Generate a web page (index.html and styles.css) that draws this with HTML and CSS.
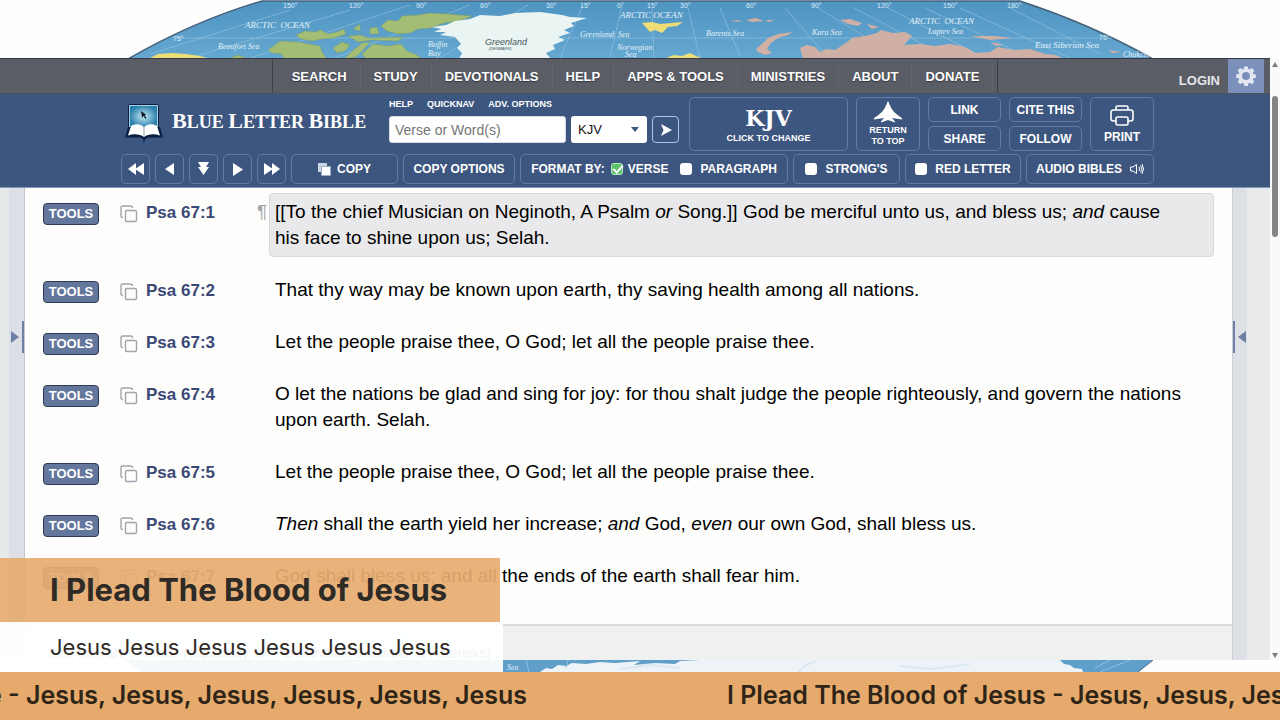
FILE: index.html
```html
<!DOCTYPE html>
<html lang="en">
<head>
  <meta charset="UTF-8">
  <meta name="viewport" content="width=device-width, initial-scale=1">
  <title>Psalm 67 - Blue Letter Bible</title>
  <link rel="stylesheet" href="styles.css">
</head>
<body>
  <!-- world map backdrop -->
  <svg class="map-top" viewBox="0 0 1280 58" preserveAspectRatio="xMidYMin slice" aria-hidden="true">
    <defs>
      <linearGradient id="sea" x1="0" y1="0" x2="0" y2="1">
        <stop offset="0" stop-color="#4f94c2"/>
        <stop offset="1" stop-color="#65a8d1"/>
      </linearGradient>
    </defs>
    <path d="M128 59 C168 36 214 15 262 1 H1020 C1066 16 1112 36 1153 59 Z" fill="url(#sea)" stroke="#46637c" stroke-width="1.5"/>
    <g class="grid-lines">
      <path d="M172 38 H1112 M290 10 L150 54 M350 10 L190 58 M410 5 L250 58 M470 5 L335 58 M528 5 L440 58 M583 5 L560 58 M622 5 L610 58 M652 8 L654 58 M688 8 L700 58 M720 8 L740 56 M785 8 L828 58 M818 8 L900 58 M854 8 L930 48 M888 8 L985 58 M925 8 L1030 58 M960 8 L1070 58 M1010 8 L1100 54"/>
    </g>
    <g class="land-green">
      <path d="M268 50 L280 41 L298 42 L309 44 L320 46 L322 52 L327 59 H285 L281 54 L272 53 Z"/>
      <path d="M296 35 L305 31 L315 32 L321 30 L328 34 L337 32 L344 29 L346 34 L334 38 L322 39 L312 41 L301 39 Z"/>
      <path d="M381 26 L388 20 L398 21 L402 16 L418 15 L430 13 L448 14 L472 16 L460 21 L444 23 L431 28 L418 29 L410 33 L398 34 L387 31 Z"/>
      <path d="M333 48 L342 42 L350 45 L345 51 L337 53 Z M350 53 L362 43 L370 42 L363 50 L356 57 L344 59 Z M348 36 L360 35 L368 38 L403 37 L398 41 L372 40 L358 42 Z"/>
      <path d="M362 54 L373 44 L388 46 L401 44 L407 51 L417 55 L422 59 H366 Z M353 29 L360 24 L360 31 Z M370 28 L377 27 L379 34 L370 34 Z M228 59 L238 55 L248 59 Z"/>
    </g>
    <path class="land-yellow" d="M148 59 L158 54 L172 53 L186 54 L200 56 L211 59 Z M642 23 L652 22 L660 24 L683 22 L677 26 L668 27 L662 33 L655 30 L650 32 Z M666 58 L674 55 L682 56 L690 53 L696 56 L704 59 Z"/>
    <path class="greenland" d="M432 27 L446 25 L455 21 L470 19 L480 15 L500 16 L515 13 L540 12 L562 15 L570 17 L587 18 L571 23 L574 26 L564 30 L570 33 L558 37 L565 40 L553 45 L555 49 L546 53 L551 59 H459 L462 53 L457 48 L461 44 L455 37 L440 35 L446 32 L434 32 L441 29 Z"/>
    <g class="land-pink">
      <path d="M756 49 L763 43 L768 38 L778 34 L793 32 L788 35 L778 38 L771 43 L767 49 L772 53 L765 55 L758 52 Z"/>
      <path d="M800 48 L807 45 L815 47 L820 52 L826 49 L835 50 L846 43 L852 38 L865 36 L877 33 L881 30 L893 33 L905 32 L912 36 L904 45 L920 44 L935 46 L950 44 L962 46 L969 49 L975 53 L990 52 L998 47 L1014 50 L1030 49 L1045 54 L1056 55 L1064 59 H803 Z"/>
      <path d="M840 20 L850 19 L862 23 L858 26 L848 24 Z M867 24 L879 27 L872 29 Z M971 36 L995 36 L1012 38 L990 40 Z M990 42 L1004 45 L996 46 Z M1109 50 L1121 52 L1112 53 Z M730 21 L738 20 L742 22 Z M746 20 L756 18 L764 21 L752 22 Z M766 20 L775 20 L768 22 Z"/>
    </g>
    <g class="degrees">
      <text x="283" y="8">150°</text><text x="349" y="8">120°</text><text x="416" y="8">90°</text><text x="480" y="8">60°</text><text x="546" y="8">30°</text><text x="580" y="8">15°</text><text x="617" y="8">0°</text><text x="647" y="8">15°</text><text x="680" y="8">30°</text><text x="746" y="8">60°</text><text x="811" y="8">90°</text><text x="877" y="8">120°</text><text x="943" y="8">150°</text><text x="1007" y="8">180°</text><text x="173" y="41">75°</text><text x="1099" y="40">75°</text>
    </g>
    <g class="seas">
      <text x="245" y="28">ARCTIC&#160; OCEAN</text><text x="620" y="18">ARCTIC OCEAN</text><text x="909" y="24">ARCTIC&#160; OCEAN</text><text x="1035" y="48">East Siberian Sea</text>
    </g>
    <g class="seas small">
      <text x="218" y="49">Beaufort Sea</text><text x="580" y="37">Greenland&#160; Sea</text><text x="428" y="47">Baffin</text><text x="428" y="56">Bay</text><text x="617" y="50">Norwegian</text><text x="625" y="57">Sea</text><text x="706" y="36">Barents Sea</text><text x="812" y="35">Kara Sea</text><text x="928" y="34">Laptev Sea</text><text x="1123" y="57">Chukchi</text>
    </g>
    <text class="country" x="485" y="45">Greenland</text>
    <text class="country tiny" x="489" y="50">(DENMARK)</text>
  </svg>

  <div class="browser">
    <div class="page">
      <nav class="site-nav">
        <ul class="menu">
          <li><a href="#">SEARCH</a></li>
          <li><a href="#">STUDY</a></li>
          <li><a href="#">DEVOTIONALS</a></li>
          <li><a href="#">HELP</a></li>
          <li><a href="#">APPS &amp; TOOLS</a></li>
          <li><a href="#">MINISTRIES</a></li>
          <li><a href="#">ABOUT</a></li>
          <li><a href="#">DONATE</a></li>
        </ul>
        <div class="account">
          <a class="login" href="#">LOGIN</a>
          <button class="settings" aria-label="Settings">
            <svg width="20" height="20" viewBox="0 0 20 20"><path fill-rule="evenodd" fill="#e2e6f1" d="M8.2 0.5h3.6l.5 2.5 1.3.6 2.2-1.5 2.5 2.5-1.5 2.2.6 1.3 2.5.5v3.2l-2.5.5-.6 1.3 1.5 2.2-2.5 2.5-2.2-1.5-1.3.6-.5 2.5H8.2l-.5-2.5-1.3-.6-2.2 1.5-2.5-2.5 1.5-2.2-.6-1.3-2.5-.5V8.6l2.5-.5.6-1.3L1.7 4.6l2.5-2.5 2.2 1.5 1.3-.6zM10 6a4 4 0 1 0 0 8 4 4 0 0 0 0-8z"/></svg>
          </button>
        </div>
      </nav>

      <header class="header">
        <div class="header-inner">
          <div class="bar">
            <a class="logo" href="#" aria-label="Blue Letter Bible">
              <svg width="40" height="42" viewBox="0 0 40 42">
                <defs><radialGradient id="screen"><stop offset="0" stop-color="#c4ecf3"/><stop offset="1" stop-color="#2c80ad"/></radialGradient></defs>
                <rect x="4" y="1" width="31" height="26" rx="2" fill="#0d1f42"/>
                <rect x="5.5" y="2.5" width="28" height="22" fill="url(#screen)" stroke="#a6d2e4"/>
                <path d="M17 8l1 7 1.5-2 2 3 1-1-2-3h2z" fill="#101a30"/>
                <path d="M4 24L1 34.5h15l3.5 2V41l1.5-4.5 3-2h15L36 24z" fill="#0d1f42"/>
                <path d="M20 24.5c-3-4-9-4-13-1.5L4 32.5c5-2 12-2 16 1.5 4-3.5 11-3.5 16-1.5L33 23c-4-2.5-10-2.5-13 1.5z" fill="#fff"/>
                <path d="M20 24.5V34" stroke="#9aa7bd"/>
              </svg>
              <span class="logo-text"><b>B</b>LUE <b>L</b>ETTER <b>B</b>IBLE</span>
            </a>
            <form class="search">
              <div class="search-links"><a href="#">HELP</a><a href="#">QUICKNAV</a><a href="#">ADV. OPTIONS</a></div>
              <div class="search-row">
                <input type="text" class="search-input" placeholder="Verse or Word(s)" aria-label="Verse or Word(s)">
                <span class="select-wrap">
                  <select aria-label="Version"><option>KJV</option></select>
                </span>
                <button type="button" class="go" aria-label="Search"><svg width="12" height="12" viewBox="0 0 12 12"><path d="M1 0l11 6-11 6 2.5-6z" fill="#fff"/></svg></button>
              </div>
            </form>
            <button class="btn version"><span class="version-name">KJV</span><small>CLICK TO CHANGE</small></button>
            <button class="btn stack top">
              <svg width="28" height="22" viewBox="0 0 28 22"><path d="M14 0l3.5 7.5Q20 12 28 17v1.5L18 17l3 3.5v1L14 19l-7 2.5v-1L10 17 0 18.5V17q8-5 10.500-9.500z" fill="#fff"/></svg>
              <small>RETURN<br>TO TOP</small>
            </button>
            <div class="pair"><button class="btn">LINK</button><button class="btn">SHARE</button></div>
            <div class="pair"><button class="btn">CITE THIS</button><button class="btn">FOLLOW</button></div>
            <button class="btn stack print">
              <svg width="24" height="21" viewBox="0 0 24 21" fill="none" stroke="#fff" stroke-width="1.6"><path d="M6 5V2.5Q6 1 7.5 1h9Q18 1 18 2.5V5M6 16H3.5Q1 16 1 13.5v-6Q1 5 3.5 5h17Q23 5 23 7.5v6q0 2.5-2.5 2.5H18"/><rect x="6" y="12" width="12" height="8" rx="1.5"/></svg>
              PRINT
            </button>
          </div>

          <div class="bar tools-bar">
            <button class="btn arrow" aria-label="Previous book"><svg width="16" height="12" viewBox="0 0 16 12"><path d="M8 0v12L0 6zM16 0v12L7 6z" fill="#fff"/></svg></button>
            <button class="btn arrow" aria-label="Previous chapter"><svg width="9" height="12" viewBox="0 0 9 12"><path d="M9 0v12L0 6z" fill="#fff"/></svg></button>
            <button class="btn arrow" aria-label="Jump down"><svg width="11" height="14" viewBox="0 0 11 14"><path d="M0 0h11L8 5h3l-5.5 8L0 5h3z" fill="#fff"/></svg></button>
            <button class="btn arrow" aria-label="Next chapter"><svg width="10" height="13" viewBox="0 0 10 13"><path d="M0 0v13l10-6.5z" fill="#fff"/></svg></button>
            <button class="btn arrow" aria-label="Next book"><svg width="16" height="12" viewBox="0 0 16 12"><path d="M0 0v12l9-6zM8 0v12l8-6z" fill="#fff"/></svg></button>
            <button class="btn copy"><svg width="13" height="13" viewBox="0 0 13 13"><path d="M0 0h9v9H0z" fill="#cbd5e5"/><path d="M3.5 3.5h9v9h-9z" fill="#fff" stroke="#9aacc8"/></svg>COPY</button>
            <button class="btn copy-options">COPY OPTIONS</button>
            <div class="btn format">
              FORMAT BY:
              <label><input type="checkbox" checked>VERSE</label>
              <label class="wide"><input type="checkbox">PARAGRAPH</label>
            </div>
            <label class="btn wide strongs"><input type="checkbox">STRONG'S</label>
            <label class="btn wide red-letter"><input type="checkbox">RED LETTER</label>
            <button class="btn audio">AUDIO BIBLES<svg width="14" height="12" viewBox="0 0 14 12" fill="none" stroke="#fff"><path d="M.5 4v4H3l3.5 2.5v-9L3 4zM9 4q1.5 2 0 4M10.5 2.5q3 3.5 0 7M12 1q3 5 0 10"/></svg></button>
          </div>
        </div>
      </header>

      <div class="content">
        <aside class="side left"><button class="drawer" aria-label="Open left panel"></button></aside>
        <main class="chapter">
          <section class="verses">
            <div class="verse current">
              <button class="tools">TOOLS</button><svg class="copy-icon" viewBox="0 0 18 18"><use href="#copy"/></svg><a href="#">Psa 67:1</a><span class="pilcrow">¶</span>
              <p>[[To the chief Musician on Neginoth, A Psalm <em>or</em> Song.]] God be merciful unto us, and bless us; <em>and</em> cause his face to shine upon us; Selah.</p>
            </div>
            <div class="verse">
              <button class="tools">TOOLS</button><svg class="copy-icon" viewBox="0 0 18 18"><use href="#copy"/></svg><a href="#">Psa 67:2</a>
              <p>That thy way may be known upon earth, thy saving health among all nations.</p>
            </div>
            <div class="verse">
              <button class="tools">TOOLS</button><svg class="copy-icon" viewBox="0 0 18 18"><use href="#copy"/></svg><a href="#">Psa 67:3</a>
              <p>Let the people praise thee, O God; let all the people praise thee.</p>
            </div>
            <div class="verse">
              <button class="tools">TOOLS</button><svg class="copy-icon" viewBox="0 0 18 18"><use href="#copy"/></svg><a href="#">Psa 67:4</a>
              <p>O let the nations be glad and sing for joy: for thou shalt judge the people righteously, and govern the nations upon earth. Selah.</p>
            </div>
            <div class="verse">
              <button class="tools">TOOLS</button><svg class="copy-icon" viewBox="0 0 18 18"><use href="#copy"/></svg><a href="#">Psa 67:5</a>
              <p>Let the people praise thee, O God; let all the people praise thee.</p>
            </div>
            <div class="verse">
              <button class="tools">TOOLS</button><svg class="copy-icon" viewBox="0 0 18 18"><use href="#copy"/></svg><a href="#">Psa 67:6</a>
              <p><em>Then</em> shall the earth yield her increase; <em>and</em> God, <em>even</em> our own God, shall bless us.</p>
            </div>
            <div class="verse">
              <button class="tools">TOOLS</button><svg class="copy-icon" viewBox="0 0 18 18"><use href="#copy"/></svg><a href="#">Psa 67:7</a>
              <p>God shall bless us; and all the ends of the earth shall fear him.</p>
            </div>
          </section>
          <footer class="note">See the KJV Preface (especially for Parenthesis, Brackets, &amp; Asterisks)</footer>
        </main>
        <aside class="side right"><button class="drawer" aria-label="Open right panel"></button></aside>
      </div>
    </div>
    <div class="scrollbar"><i class="up"></i><i class="thumb"></i><i class="down"></i></div>
  </div>

  <svg class="map-bottom" viewBox="0 0 1280 12" preserveAspectRatio="xMidYMin slice" aria-hidden="true">
    <path d="M125 0 H1153 L1138 12 H140 Z" fill="#5f9fca"/>
    <path d="M1153 0 L1138 12" stroke="#46637c"/>
    <path d="M540 12 L546 8 L552 9 L558 5 L566 6 L572 3 L586 4 L600 2 L615 3 L640 1 L634 5 L655 3 L675 4 L680 1 L700 0 H1060 L1064 4 L1070 5 L1074 8 L1082 9 L1083 12 Z" fill="#edf3f7"/>
    <path d="M798 12 L806 5 L816 1 M620 9 L650 5 L680 8 M900 6 L930 9 L970 4" stroke="#dbe8f0" stroke-width="2" fill="none"/>
    <path d="M526 0 L529 12 M568 0 L566 8 M1130 0 L1100 12 M1110 0 L1095 8" stroke="#8dbfdd" fill="none"/>
    <g class="seas small"><text x="507" y="10">Sea</text></g>
  </svg>

  <footer class="ticker">
    <span class="ticker-out">e - Jesus, Jesus, Jesus, Jesus, Jesus, Jesus</span>
    <span>I Plead The Blood of Jesus - Jesus, Jesus, Jesus, Jesus, Jesus, Jesus</span>
  </footer>

  <!-- lower third caption over the page -->
  <div class="lower-third">
    <h1>I Plead The Blood of Jesus</h1>
    <p>Jesus Jesus Jesus Jesus Jesus Jesus</p>
  </div>

  <svg class="sprite" aria-hidden="true">
    <symbol id="copy" viewBox="0 0 18 18"><g fill="none" stroke="#a3a4ab" stroke-width="1.4"><rect x="5.5" y="5.5" width="11" height="11" rx="1.5"/><path d="M3 12.5Q1 12.5 1 10.5v-8Q1 1 2.5 1h8q2 0 2 2"/></g></symbol>
  </svg>
</body>
</html>
```

FILE: styles.css
```css
* { box-sizing: border-box; margin: 0; padding: 0; }
body { min-height: 100vh; display: flex; flex-direction: column; position: relative; overflow: hidden; background: #fefefe; font-family: "Liberation Sans", Arial, sans-serif; color: #000; }
a { color: inherit; text-decoration: none; }
button, input, select { font: inherit; color: inherit; }
button { cursor: pointer; }

/* map */
.map-top { display: block; width: 100%; height: 58px; }
.map-bottom { display: block; width: 100%; height: 12px; }
.grid-lines { fill: none; stroke: #a3cde6; stroke-opacity: 0.5; }
.land-green { fill: #a3bd74; stroke: #7b9c6c; stroke-width: 0.5; }
.land-yellow { fill: #ecdd74; }
.land-pink { fill: #d0b0a5; }
.greenland { fill: #e9f4f3; }
.degrees { font: 7px "Liberation Sans", sans-serif; fill: #dcecf6; }
.seas { font: italic 9px "Liberation Serif", serif; fill: #e3f0f8; }
.seas.small { font-size: 8px; }
.country { font: italic 9px "Liberation Sans", sans-serif; fill: #44545a; }
.country.tiny { font-size: 4px; }
.sprite { position: absolute; width: 0; height: 0; }

.browser { flex: 1; display: flex; }
.page { flex: 1; display: flex; flex-direction: column; min-width: 0; }
.scrollbar { width: 10px; display: flex; flex-direction: column; align-items: center; background: #fafafa; padding: 4px 0 2px; }
.scrollbar .up, .scrollbar .down { border: 3px solid transparent; }
.scrollbar .up { border-top: 0; border-bottom: 5px solid #7b7b7b; }
.scrollbar .down { border-bottom: 0; border-top: 5px solid #7b7b7b; margin-top: auto; }
.scrollbar .thumb { width: 6px; height: 141px; margin-top: 29px; border-radius: 3px; background: #858585; }

/* grey menu */
.site-nav { display: grid; grid-template-columns: 1fr auto 1fr; height: 36px; background: #5a5c66; border-top: 1px solid #363a44; border-bottom: 1px solid #4c5058; color: #fff; font-size: 13px; font-weight: bold; }
.menu { grid-column: 2; display: flex; align-items: center; list-style: none; padding: 2px 4px 0 6px; border: solid #3d4048; border-width: 0 1px; }
.menu a { display: block; padding: 0 13px; line-height: 26px; border-right: 1px solid #63656f; text-shadow: 0 1px 1px #33353b; margin-right: -1px; }
.menu li { padding-right: 1px; }
.account { display: flex; justify-content: flex-end; align-items: stretch; padding-right: 6px; }
.login { color: #e4e5ea; padding: 14px 8px 0 0; }
.settings { width: 36px; border: 0; background: #7b90bb; display: flex; align-items: center; justify-content: center; }

/* blue toolbar */
.header { background: #3d567f; color: #fff; padding: 3px 0; border-bottom: 1px solid #8697b3; }
.header-inner { width: fit-content; margin: 0 auto; padding-left: 5px; }
.bar { display: flex; gap: 8px; }
.tools-bar { gap: 5px; margin-top: 3px; }
.btn { display: flex; align-items: center; justify-content: center; border: 1px solid #5f7ba6; border-radius: 5px; background: none; color: #fff; font-size: 12px; font-weight: bold; white-space: nowrap; }
.btn small { font-size: 9px; line-height: 11px; }
.logo { width: 260px; padding-left: 3px; display: flex; align-items: center; gap: 8px; }
.logo-text { font: bold 18px "Liberation Serif", serif; white-space: nowrap; padding-bottom: 6px; }
.logo-text b { font-size: 22px; }
.search { width: 292px; }
.search-links { display: flex; gap: 14px; font-size: 9px; font-weight: bold; line-height: 14px; margin-bottom: 5px; }
.search-row { display: flex; gap: 5px; }
.search-input { width: 177px; height: 27px; border: 1px solid #d5dbe6; border-radius: 3px; padding: 0 5px; background: #fff; font-size: 14px; color: #222; }
.search-input::placeholder { color: #757575; }
.select-wrap { position: relative; }
.select-wrap::after { content: ""; position: absolute; right: 8px; top: 11px; border: 4px solid transparent; border-top: 5px solid #3d567f; border-bottom: 0; pointer-events: none; }
.select-wrap select { appearance: none; width: 76px; height: 27px; padding: 0 7px; border: 0; border-radius: 3px; background: #fff; color: #111; font-size: 13px; }
.go { width: 27px; height: 27px; border: 1px solid #b3c4e2; border-radius: 4px; background: none; display: flex; align-items: center; justify-content: center; }
.version { width: 159px; flex-direction: column; gap: 2px; }
.version-name { font: bold 22px/26px "DejaVu Serif", serif; }
.stack { width: 64px; flex-direction: column; gap: 2px; }
.print { gap: 4px; }
.pair { display: flex; flex-direction: column; gap: 4px; }
.pair .btn { width: 73px; height: 25px; }
.tools-bar .btn { height: 30px; }
.arrow { width: 29px; }
.copy { width: 107px; gap: 6px; }
.copy-options { width: 112px; }
.format { width: 268px; gap: 6px; }
.format label, label.btn { display: flex; align-items: center; gap: 5px; }
.format .wide { margin-left: 6px; }
.format .wide, label.btn.wide { gap: 8px; }
.strongs { width: 107px; }
.red-letter { width: 116px; }
.audio { width: 128px; gap: 8px; }
input[type=checkbox] { appearance: none; position: relative; width: 12px; height: 12px; border-radius: 3px; background: #fff; }
input[type=checkbox]:checked { background: #5dc46b; border: 1px solid #b9edc0; }
input[type=checkbox]:checked::after { content: ""; position: absolute; left: 3px; top: -1px; width: 4px; height: 8px; border: solid #fff; border-width: 0 2px 2px 0; transform: rotate(42deg); }

/* chapter */
.content { flex: 1; display: flex; }
.side { display: flex; align-items: center; padding-bottom: 174px; }
.side.left { width: 25px; border-right: 1px solid #bfc5d1; background: linear-gradient(to right, #e6e9ea 9px, #dce0e6 9px); }
.side.right { width: 38px; border-left: 1px solid #c9cdd5; background: linear-gradient(to right, #dde0e5 14px, #e8eaeb 14px); }
.drawer { width: 13px; height: 32px; border: 0; background: none; display: flex; align-items: center; justify-content: space-between; }
.drawer::after { content: ""; border: 6px solid transparent; }
.left .drawer { margin-left: auto; border-right: 2px solid #6f7fa5; }
.left .drawer::after { border-left: 8px solid #6f7fa5; border-right: 0; }
.right .drawer { border-left: 2px solid #6f7fa5; justify-content: flex-end; }
.right .drawer::after { border-right: 8px solid #6f7fa5; border-left: 0; }
.chapter { flex: 1; display: flex; flex-direction: column; background: #fdfdfc; }
.verses { padding: 0 18px 20px; }
.verse { display: grid; grid-template-columns: 77px 26px 111px 18px 1fr; align-items: start; padding: 11px 0 15px; line-height: 26px; font-size: 19px; }
.verse p { grid-column: 5; padding-right: 28px; }
.verse a { margin-top: 2px; color: #3b4876; font-size: 17px; font-weight: bold; line-height: 24px; }
.tools { width: 56px; height: 22px; margin-top: 4px; border: 1px solid #2e3a57; border-radius: 4px; background: #63779c; color: #fff; font-size: 13px; font-weight: bold; line-height: 20px; }
.copy-icon { width: 18px; height: 18px; margin-top: 6px; }
.pilcrow { color: #a5a5aa; }
.verse.current { grid-template-columns: 77px 26px 111px 12px 1fr; }
.verse.current p { margin: -6px 0; padding: 5px 28px 5px 5px; border: 1px solid #d8d8dc; border-radius: 4px; background: #e9e9eb; }
.note { flex: 1; padding: 22px 24px 0; border-top: 2px solid #d9dbdc; background: #eff0f0; color: #333; font-size: 14px; line-height: 11px; }

.ticker { height: 48px; display: flex; gap: 200px; align-items: center; overflow: hidden; background: #e6ab6c; color: #2e2417; font: 600 25px Inter, sans-serif; white-space: nowrap; }
.ticker span { line-height: 44px; padding-bottom: 2px; }
.ticker-out { flex: 0 0 527px; min-width: 0; display: flex; justify-content: flex-end; }

.lower-third { position: absolute; left: 0; bottom: 48px; color: #2e2a26; font-family: Inter, sans-serif; }
.lower-third h1 { width: 500px; padding-left: 50px; background: rgba(230, 172, 112, 0.93); font-size: 31px; font-weight: 700; line-height: 64px; }
.lower-third p { width: 503px; padding-left: 50px; background: rgba(255, 255, 255, 0.94); font-size: 22px; font-weight: 400; line-height: 50px; }
```
